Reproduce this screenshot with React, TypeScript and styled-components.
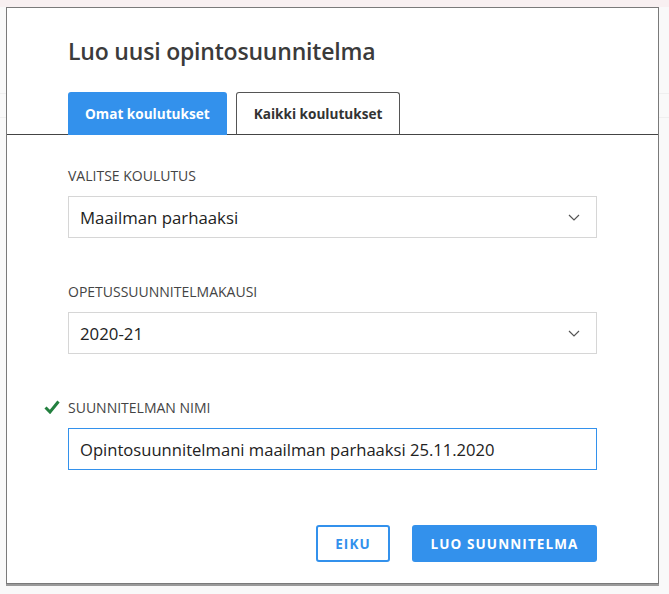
import React, { useState } from 'react';
import styled, { createGlobalStyle } from 'styled-components';

const GlobalStyle = createGlobalStyle`
  html, body {
    margin: 0;
    padding: 0;
    background: #f9f9f9;
    font-family: "Open Sans", "Noto Sans", sans-serif;
  }
`;

const font = `"Open Sans", "Noto Sans", sans-serif`;

const Page = styled.div`
  position: relative;
  width: 669px;
  height: 594px;
  overflow: hidden;
  background: #f9f9f9;
`;

const TopStrip = styled.div`
  height: 7px;
  background: #f8f0f1;
`;

const BackdropRow = styled.div<{ $top: number }>`
  margin-top: ${p => p.$top}px;
  height: 1px;
  background: #efefef;
`;

const Modal = styled.div`
  position: absolute;
  left: 6px;
  top: 7px;
  width: 651px;
  height: 575px;
  background: #fff;
  border: 1px solid #7a7a7a;
  box-shadow: 0 2px 0 #9a9a9a;
  display: flex;
  flex-direction: column;
`;

const Header = styled.div`
  padding: 28px 0 0 61px;
`;

const Title = styled.h2`
  margin: 0 0 26px;
  font-family: ${font};
  font-size: 23px;
  line-height: 30px;
  font-weight: 600;
  color: #3b3b3b;
  letter-spacing: -0.2px;
`;

const TabBar = styled.div`
  display: flex;
  gap: 9px;
  padding-left: 61px;
  border-bottom: 1px solid #444;
`;

const Tab = styled.button<{ $active?: boolean }>`
  height: 43px;
  padding: 0 17px;
  margin-bottom: -1px;
  font-family: ${font};
  font-size: 13.6px;
  font-weight: 700;
  border-radius: 3px 3px 0 0;
  cursor: pointer;
  ${p => p.$active ? `
    background: #3391ec;
    color: #fff;
    border: none;
    border-bottom: 1px solid #3391ec;
  ` : `
    background: #fff;
    color: #333;
    border: 1px solid #555;
    border-bottom: 1px solid #444;
  `}
`;

const Body = styled.div`
  padding: 32px 61px 0 61px;
  display: flex;
  flex-direction: column;
`;

const Field = styled.div<{ $gap?: number }>`
  margin-bottom: ${p => p.$gap ?? 0}px;
`;

const Label = styled.label`
  position: relative;
  display: block;
  font-family: ${font};
  font-size: 14px;
  line-height: 17px;
  color: #444;
  text-transform: uppercase;
  margin-bottom: 12px;
`;

const Check = styled.svg`
  position: absolute;
  left: -24px;
  top: 1px;
`;

const SelectBox = styled.div`
  height: 42px;
  box-sizing: border-box;
  border: 1px solid #d6d6d6;
  display: flex;
  align-items: center;
  justify-content: space-between;
  padding: 0 16px 0 11px;
  font-family: ${font};
  font-size: 16.8px;
  color: #222;
`;

const TextInput = styled.input`
  height: 42px;
  width: 100%;
  box-sizing: border-box;
  border: 1px solid #3391ec;
  outline: none;
  padding: 0 11px;
  font-family: ${font};
  font-size: 16.6px;
  color: #222;
`;

const Footer = styled.div`
  display: flex;
  justify-content: flex-end;
  gap: 22px;
  padding: 55px 61px 0 0;
`;

const Button = styled.button<{ $primary?: boolean }>`
  height: 37px;
  box-sizing: border-box;
  border-radius: 3px;
  font-family: ${font};
  font-size: 13.5px;
  font-weight: 700;
  letter-spacing: 1.1px;
  cursor: pointer;
  ${p => p.$primary ? `
    background: #3391ec;
    color: #fff;
    border: none;
    padding: 0;
    width: 185px;
  ` : `
    background: #fff;
    color: #3391ec;
    border: 2px solid #3391ec;
    padding: 0;
    width: 74px;
  `}
`;

const Chevron = () => (
  <svg width="12" height="7" viewBox="0 0 12 7" fill="none">
    <path d="M1 1l5 5 5-5" stroke="#555" strokeWidth="1.2" />
  </svg>
);

export default function App() {
  const [tab, setTab] = useState(0);
  const [name, setName] = useState('Opintosuunnitelmani maailman parhaaksi 25.11.2020');

  return (
    <Page>
      <GlobalStyle />
      <TopStrip />
      <BackdropRow $top={86} />
      <BackdropRow $top={23} />
      <Modal>
        <Header>
          <Title>Luo uusi opintosuunnitelma</Title>
        </Header>
        <TabBar>
          <Tab $active={tab === 0} onClick={() => setTab(0)}>Omat koulutukset</Tab>
          <Tab $active={tab === 1} onClick={() => setTab(1)}>Kaikki koulutukset</Tab>
        </TabBar>
        <Body>
          <Field $gap={45}>
            <Label>Valitse koulutus</Label>
            <SelectBox>
              Maailman parhaaksi
              <Chevron />
            </SelectBox>
          </Field>
          <Field $gap={45}>
            <Label>Opetussuunnitelmakausi</Label>
            <SelectBox>
              2020-21
              <Chevron />
            </SelectBox>
          </Field>
          <Field>
            <Label>
              <Check width="16" height="14" viewBox="0 0 16 14">
                <path d="M1.5 7.5l4.5 4.5L14.5 1.5" stroke="#23803f" strokeWidth="3" fill="none" />
              </Check>
              Suunnitelman nimi
            </Label>
            <TextInput value={name} onChange={e => setName(e.target.value)} />
          </Field>
        </Body>
        <Footer>
          <Button>EIKU</Button>
          <Button $primary>LUO SUUNNITELMA</Button>
        </Footer>
      </Modal>
    </Page>
  );
}
